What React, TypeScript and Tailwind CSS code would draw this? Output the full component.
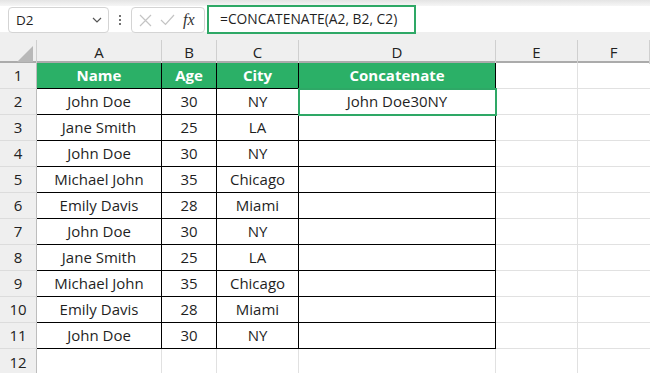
import React from 'react';

const rows = [
  ['Name', 'Age', 'City', 'Concatenate'],
  ['John Doe', '30', 'NY', 'John Doe30NY'],
  ['Jane Smith', '25', 'LA', ''],
  ['John Doe', '30', 'NY', ''],
  ['Michael John', '35', 'Chicago', ''],
  ['Emily Davis', '28', 'Miami', ''],
  ['John Doe', '30', 'NY', ''],
  ['Jane Smith', '25', 'LA', ''],
  ['Michael John', '35', 'Chicago', ''],
  ['Emily Davis', '28', 'Miami', ''],
  ['John Doe', '30', 'NY', ''],
];

const cols = 'grid grid-cols-[37px_125px_55px_82px_197px_82px_1fr]';

export default function App() {
  return (
    <div className="w-[650px] h-[373px] overflow-hidden bg-white text-[#1f1f1f]" style={{ fontFamily: '"Open Sans", "Noto Sans", sans-serif' }}>
      {/* Formula bar */}
      <div className="h-[32px] relative bg-white">
        <div className="h-[6px] bg-gradient-to-b from-[#e4e4e4] to-[#f6f6f6]" />
        <div className="absolute left-[8px] top-[7px] flex items-center gap-[10px]">
          <div className="w-[101px] h-[26px] border border-[#d4d4d4] rounded-[4px] bg-white flex items-center justify-between pl-[7px] pr-[6px] text-[13.5px]">
            <span>D2</span>
            <svg width="10" height="6" viewBox="0 0 10 6" fill="none" stroke="#555" strokeWidth="1.2">
              <path d="M1 1l4 4 4-4" />
            </svg>
          </div>
          <div className="flex flex-col gap-[2px]">
            <span className="w-[2px] h-[2px] bg-[#444] rounded-full" />
            <span className="w-[2px] h-[2px] bg-[#444] rounded-full" />
            <span className="w-[2px] h-[2px] bg-[#444] rounded-full" />
          </div>
          <div className="w-[74px] h-[26px] border border-[#d4d4d4] rounded-[4px] bg-white flex items-center pl-[7px] gap-[8px]">
            <svg width="13" height="13" viewBox="0 0 13 13" stroke="#c4c4c4" strokeWidth="1.2">
              <path d="M1 1l11 11M12 1L1 12" />
            </svg>
            <svg width="15" height="12" viewBox="0 0 15 12" fill="none" stroke="#c4c4c4" strokeWidth="1.2">
              <path d="M1 6l4.5 4.5L14 1" />
            </svg>
            <span className="italic text-[16px] text-[#333] leading-none" style={{ fontFamily: '"Liberation Serif", serif' }}>fx</span>
          </div>
        </div>
        <div className="absolute left-[207px] top-[5px] w-[209px] h-[29px] border-2 border-[#2ea866] bg-white flex items-center pl-[11px] text-[13.8px]">
          =CONCATENATE(A2, B2, C2)
        </div>
      </div>

      {/* Column headers */}
      <div className={`${cols} h-[31px] bg-[#efefef] border-b-2 border-[#ababab]`}>
        <div className="relative border-r border-[#cfcfcf] mt-[8px]">
          <svg className="absolute right-[3px] bottom-[2px]" width="16" height="16" viewBox="0 0 16 16">
            <path d="M16 0V16H0Z" fill="#b8b8b8" />
          </svg>
        </div>
        {['A', 'B', 'C', 'D', 'E', 'F'].map((c) => (
          <div key={c} className="mt-[8px] pt-[1px] border-r border-[#cfcfcf] flex items-center justify-center text-[15px] text-[#222]">
            {c}
          </div>
        ))}
      </div>

      {/* Grid */}
      <div className="relative">
        {rows.map((r, i) => (
          <div key={i} className={`${cols} h-[26px]`}>
            <div className="bg-[#efefef] border-r border-b border-r-[#bdbdbd] border-b-[#dcdcdc] flex items-center justify-center text-[15px] text-[#222]">
              {i + 1}
            </div>
            {r.map((v, j) => (
              <div
                key={j}
                className={`border-r border-b border-black flex items-center justify-center text-[15px] ${
                  i === 0 ? 'bg-[#2bb067] text-white font-bold' : 'text-[#1f1f1f]'
                }`}
              >
                {v}
              </div>
            ))}
            <div className="border-r border-b border-[#e1e1e1]" />
            <div className="border-b border-[#e1e1e1]" />
          </div>
        ))}
        <div className={`${cols} h-[26px]`}>
          <div className="bg-[#efefef] border-r border-[#bdbdbd] flex items-center justify-center text-[15px] text-[#222]">12</div>
          {[0, 1, 2, 3, 4].map((k) => (
            <div key={k} className="border-r border-[#e1e1e1]" />
          ))}
          <div />
        </div>
        {/* Selection D2 */}
        <div className="absolute left-[298px] top-[25px] w-[199px] h-[28px] border-2 border-[#2ea866]" />
      </div>
    </div>
  );
}
